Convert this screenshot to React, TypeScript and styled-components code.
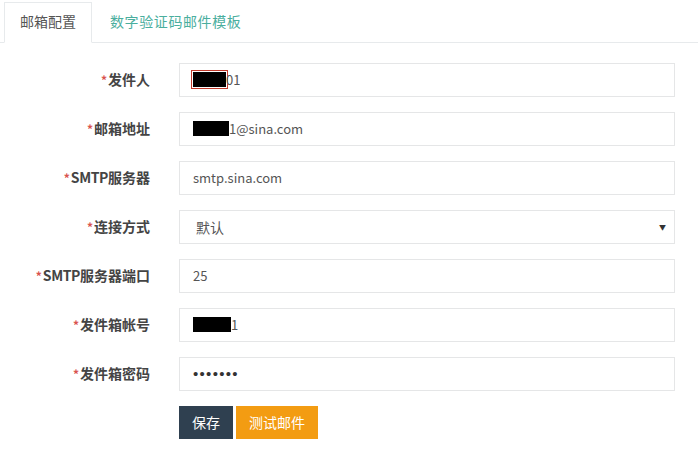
import React from "react";
import styled, { createGlobalStyle } from "styled-components";

const Global = createGlobalStyle`
  html, body { margin: 0; padding: 0; background: #fff; }
  body { font-family: "Open Sans", "Noto Sans CJK SC", sans-serif; color: #676a6c; }
  * { box-sizing: border-box; }
`;

const Page = styled.div`
  width: 698px;
  height: 466px;
  background: #fff;
  overflow: hidden;
`;

const TabBar = styled.div`
  display: flex;
  align-items: flex-end;
  padding: 2px 0 0 4px;
  border-bottom: 1px solid #e7eaec;
  height: 43px;
`;

const Tab = styled.div<{ $active?: boolean }>`
  height: 41px;
  padding: 0 15px 3px;
  margin-right: 2px;
  margin-bottom: -1px;
  display: flex;
  align-items: center;
  font-family: "Noto Sans CJK SC", sans-serif;
  font-size: 14px;
  letter-spacing: ${(p) => (p.$active ? "0" : "0.6px")};
  color: ${(p) => (p.$active ? "#555" : "#4aae9e")};
  background: ${(p) => (p.$active ? "#fff" : "transparent")};
  border: 1px solid ${(p) => (p.$active ? "#e7eaec" : "transparent")};
  border-bottom-color: ${(p) => (p.$active ? "#fff" : "transparent")};
`;

const Form = styled.div`
  display: grid;
  grid-template-columns: 150px 496px;
  column-gap: 29px;
  row-gap: 15px;
  padding-top: 20px;
  align-items: center;
`;

const Label = styled.div`
  text-align: right;
  font-family: "Noto Sans CJK SC", sans-serif;
  font-weight: 700;
  font-size: 14px;
  line-height: 18px;
  padding-bottom: 2px;
  color: #444;
  white-space: nowrap;
`;

const Star = styled.span`
  color: #d9534f;
  font-weight: 700;
  font-size: 12px;
  margin-right: 1px;
`;

const Latin = styled.span`
  letter-spacing: -0.4px;
`;

const Field = styled.div`
  position: relative;
  height: 34px;
  border: 1px solid #e5e6e7;
  padding: 0 13px 1px;
  display: flex;
  align-items: center;
  font-family: "Noto Sans CJK SC", sans-serif;
  font-size: 13px;
  color: #555;
  background: #fff;
  white-space: nowrap;
`;

const SelectField = styled(Field)`
  font-size: 14px;
  padding-left: 16px;
  &::after {
    content: "▼";
    position: absolute;
    right: 8px;
    top: 50%;
    transform: translateY(-50%);
    font-size: 7px;
    color: #333;
  }
`;

const Redact = styled.span<{ $w: number; $outline?: boolean }>`
  display: inline-block;
  width: ${(p) => p.$w}px;
  height: 15px;
  background: #000;
  outline: ${(p) => (p.$outline ? "1px solid #c0392b" : "none")};
  outline-offset: 1px;
`;

const Dots = styled.span`
  font-family: "Liberation Sans", sans-serif;
  font-size: 15px;
  letter-spacing: 1.3px;
  color: #333;
`;

const Buttons = styled.div`
  grid-column: 2;
  display: flex;
  gap: 3px;
`;

const Button = styled.button<{ $variant: "dark" | "warn" }>`
  height: 33px;
  padding: 0 13px 2px;
  border: none;
  font-family: "Noto Sans CJK SC", sans-serif;
  font-size: 14px;
  color: #fff;
  background: ${(p) => (p.$variant === "dark" ? "#2f4050" : "#f39c12")};
`;

const rows: { label: React.ReactNode; key: string; content: React.ReactNode; select?: boolean }[] = [
  {
    key: "sender",
    label: "发件人",
    content: (
      <>
        <Redact $w={33} $outline />
        <span>01</span>
      </>
    ),
  },
  {
    key: "addr",
    label: "邮箱地址",
    content: (
      <>
        <Redact $w={36} />
        <span>1@sina.com</span>
      </>
    ),
  },
  { key: "smtp", label: <><Latin>SMTP</Latin>服务器</>, content: "smtp.sina.com" },
  { key: "mode", label: "连接方式", content: "默认", select: true },
  { key: "port", label: <><Latin>SMTP</Latin>服务器端口</>, content: "25" },
  {
    key: "account",
    label: "发件箱帐号",
    content: (
      <>
        <Redact $w={38} />
        <span>1</span>
      </>
    ),
  },
  { key: "pwd", label: "发件箱密码", content: <Dots>•••••••</Dots> },
];

export default function App() {
  return (
    <Page>
      <Global />
      <TabBar>
        <Tab $active>邮箱配置</Tab>
        <Tab>数字验证码邮件模板</Tab>
      </TabBar>
      <Form>
        {rows.map((r) => (
          <React.Fragment key={r.key}>
            <Label>
              <Star>*</Star>
              {r.label}
            </Label>
            {r.select ? <SelectField>{r.content}</SelectField> : <Field>{r.content}</Field>}
          </React.Fragment>
        ))}
        <Buttons>
          <Button $variant="dark">保存</Button>
          <Button $variant="warn">测试邮件</Button>
        </Buttons>
      </Form>
    </Page>
  );
}
